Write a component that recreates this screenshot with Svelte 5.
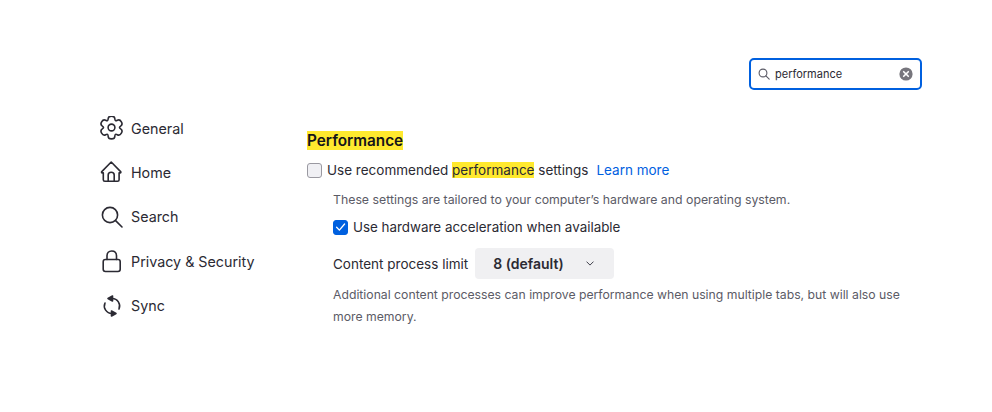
<script>
	const navItems = ['General', 'Home', 'Search', 'Privacy & Security', 'Sync'];

	// six rounded lobes: corners become curve controls, edge midpoints the anchors
	function gearPath(cx, cy) {
		const base = [[-3.3, -11.4], [3.3, -11.4], [3.4, -5.9]];
		const pts = [];
		for (let k = 0; k < 6; k++) {
			const a = (k * Math.PI) / 3;
			for (const [x, y] of base) {
				pts.push([cx + x * Math.cos(a) - y * Math.sin(a), cy + x * Math.sin(a) + y * Math.cos(a)]);
			}
		}
		const mid = (p, q) => [(p[0] + q[0]) / 2, (p[1] + q[1]) / 2];
		const fmt = (p) => `${p[0].toFixed(2)} ${p[1].toFixed(2)}`;
		let d = `M${fmt(mid(pts[pts.length - 1], pts[0]))}`;
		pts.forEach((p, i) => {
			d += `Q${fmt(p)} ${fmt(mid(p, pts[(i + 1) % pts.length]))}`;
		});
		return d + 'Z';
	}
</script>

<div class="page">
	<div class="topbar">
		<div class="search">
			<svg class="search-icon" viewBox="0 0 12 12" width="12" height="12" fill="none" stroke="#5b5b66" stroke-width="1.1">
				<circle cx="5" cy="5" r="3.9" />
				<path d="M7.9 7.9 11.2 11.2" stroke-linecap="round" />
			</svg>
			<span class="search-text">performance</span>
			<svg class="clear" viewBox="0 0 14 14" width="14" height="14">
				<circle cx="7" cy="7" r="6.6" fill="#77767d" />
				<path d="M4.7 4.7 9.3 9.3M9.3 4.7 4.7 9.3" stroke="#fff" stroke-width="1.6" stroke-linecap="round" />
			</svg>
		</div>
	</div>

	<div class="content">
		<nav class="sidebar">
			{#each navItems as item}
				<div class="nav-item">
					<svg viewBox="0 0 24 24" width="24" height="24" fill="none" stroke="#2b2a33" stroke-width="1.6" stroke-linejoin="round" stroke-linecap="round">
						{#if item === 'General'}
							<circle cx="11.500" cy="11.500" r="3.400" />
							<path d={gearPath(11.5, 11.5)} />
						{:else if item === 'Home'}
							<path d="M11.200 2 1.800 11.600c-.5.6-.3 1.300.5 1.300h1v6.800c0 .9.6 1.500 1.500 1.500h12.800c.9 0 1.500-.6 1.500-1.500v-6.800h1c.8 0 1-.7.5-1.300z" />
							<path d="M8.200 21v-6c0-1.600 1.200-2.800 3-2.800s3 1.200 3 2.800v6" />
						{:else if item === 'Search'}
							<circle cx="10" cy="10" r="7.600" />
							<path d="M15.600 15.600 22 22" />
						{:else if item === 'Privacy & Security'}
							<rect x="3.200" y="10.500" width="17" height="12" rx="2.200" />
							<path d="M7 10.500V7C7 4 8.800 2 11.700 2s4.800 2 4.800 5v3.500" />
						{:else}
							<path d="M11 4.500h1A7.500 7.500 0 0 1 19 15" />
							<path d="M13 19.500h-1A7.500 7.500 0 0 1 5 9" />
							<path d="M8 4.500 12.500 2v5z" fill="#2b2a33" />
							<path d="M16 19.500 11.500 17v5z" fill="#2b2a33" />
						{/if}
					</svg>
					<span>{item}</span>
				</div>
			{/each}
		</nav>

		<main class="main">
			<h1><mark>Performance</mark></h1>

			<div class="row first">
				<span class="box"></span>
				<span>Use recommended <mark>performance</mark> settings</span>
				<span class="link">Learn more</span>
			</div>

			<div class="indent">
				<p class="desc top">These settings are tailored to your computer’s hardware and operating system.</p>

				<div class="row hw">
					<span class="box checked">
						<svg viewBox="0 0 14 14" width="14" height="14" fill="none" stroke="#fff" stroke-width="1.4" stroke-linecap="round" stroke-linejoin="round">
							<path d="M2.800 7.200 5.800 10.400 11.400 3.800" />
						</svg>
					</span>
					<span class="hw-label">Use hardware acceleration when available</span>
				</div>

				<div class="limit">
					<span>Content process limit</span>
					<div class="select">
						<span>8 (default)</span>
						<svg viewBox="0 0 10 6" width="8" height="5" fill="none" stroke="#3a3944" stroke-width="1.200" stroke-linecap="round" stroke-linejoin="round">
							<path d="M1 1 5 5 9 1" />
						</svg>
					</div>
				</div>

				<p class="desc bottom">Additional content processes can improve performance when using multiple tabs, but will also use more memory.</p>
			</div>
		</main>
	</div>
</div>

<style>
	:global(body) {
		margin: 0;
		background: #fff;
	}

	.page {
		width: 992px;
		height: 412px;
		box-sizing: border-box;
		padding: 58px 70px 0 100px;
		font-family: Inter, 'Noto Sans', sans-serif;
		font-size: 13.5px;
		color: #2b2a33;
		overflow: hidden;
	}

	.topbar {
		display: flex;
		justify-content: flex-end;
	}

	.search {
		width: 173px;
		height: 32px;
		box-sizing: border-box;
		border: 2px solid #0060df;
		border-radius: 5px;
		display: flex;
		align-items: center;
		padding: 0 7px;
		font-size: 11px;
	}

	.search-icon {
		margin-right: 5px;
	}

	.search-text {
		flex: 1;
	}

	.content {
		display: flex;
		margin-top: 24px;
	}

	.sidebar {
		width: 207px;
		flex-shrink: 0;
		padding-top: 2px;
		display: flex;
		flex-direction: column;
		gap: 20.4px;
	}

	.nav-item {
		display: flex;
		align-items: center;
		gap: 7px;
		height: 24px;
		font-size: 14.3px;
	}

	.main {
		width: 600px;
		padding-top: 17px;
	}

	h1 {
		margin: 0;
		font-size: 15.3px;
		font-weight: 600;
		line-height: 19px;
		color: #15141a;
	}

	mark {
		background: #ffe92e;
		color: inherit;
	}

	.row {
		display: flex;
		align-items: center;
		gap: 5px;
		line-height: 18px;
	}

	.first {
		margin-top: 11px;
	}

	.box {
		width: 15px;
		height: 15px;
		box-sizing: border-box;
		border: 1px solid #9a99a1;
		border-radius: 3px;
		background: #f0f0f4;
		display: flex;
		align-items: center;
		justify-content: center;
	}

	.box.checked {
		background: #0060df;
		border-color: #0060df;
	}

	.link {
		color: #0060df;
		margin-left: 3px;
	}

	.indent {
		padding-left: 26px;
	}

	.desc {
		margin: 0;
		font-size: 12.23px;
		line-height: 22px;
		color: #5b5b66;
		width: 580px;
	}

	.top {
		margin-top: 10px;
		font-size: 12.3px;
	}

	.hw {
		margin-top: 7px;
	}

	.hw-label {
		font-size: 13.4px;
	}

	.limit {
		display: flex;
		align-items: center;
		gap: 7px;
		margin-top: 12px;
	}

	.select {
		width: 139px;
		height: 31px;
		box-sizing: border-box;
		background: #f0f0f2;
		border-radius: 4px;
		display: flex;
		align-items: center;
		justify-content: space-between;
		padding: 0 20px 0 18px;
		font-weight: 600;
		font-size: 14px;
	}

	.bottom {
		margin-top: 5px;
	}
</style>
